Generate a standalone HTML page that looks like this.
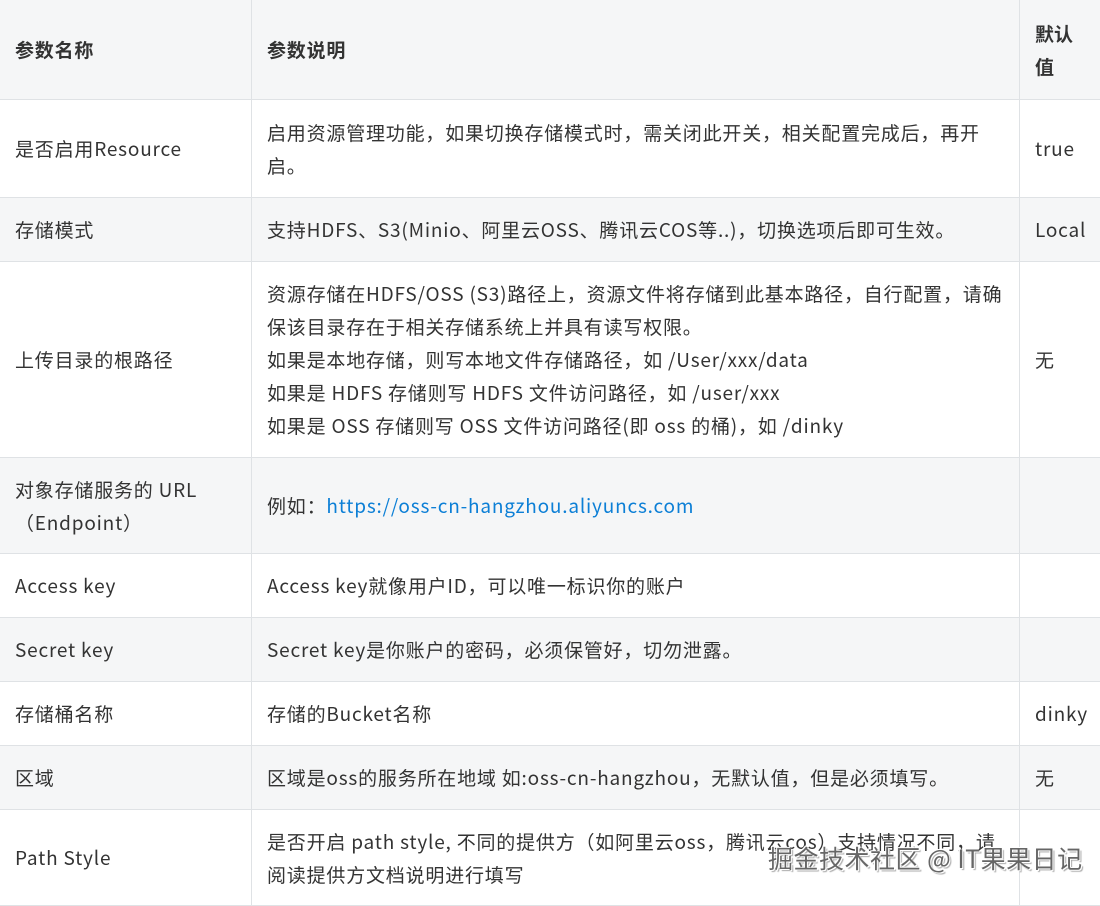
<!DOCTYPE html>
<html><head><meta charset="utf-8"><style>
body{margin:0;width:1100px;height:905px;overflow:hidden;background:#fff;font-family:"Noto Sans CJK SC","Liberation Sans",sans-serif;color:#333;font-size:19px;letter-spacing:0.8px}
table{border-collapse:collapse;position:absolute;left:-1px;top:-1px;table-layout:fixed;width:1103px}
td,th{border:1px solid #dfe2e5;padding:0 15px;line-height:33px;text-align:left;vertical-align:middle}
th{font-weight:bold;background:#f5f6f7}
tr:nth-child(odd) td{background:#f5f6f7}
a{color:#0c7fd6;text-decoration:none}
.wm{position:absolute;left:768px;top:840px;font-size:25px;color:#666;text-shadow:1px 1px 0 #fff,-1px -1px 0 #fff,2px 2px 1px #aaa;letter-spacing:0.5px}
</style></head><body>
<table>
<colgroup><col style="width:252px"><col style="width:768px"><col style="width:83px"></colgroup>
<tr style="height:100px"><th>参数名称</th><th>参数说明</th><th style="padding-right:20px;letter-spacing:0">默认<br>值</th></tr>
<tr style="height:98px"><td>是否启用Resource</td><td>启用资源管理功能，如果切换存储模式时，需关闭此开关，相关配置完成后，再开启。</td><td>true</td></tr>
<tr style="height:64px"><td>存储模式</td><td>支持HDFS、S3(Minio、阿里云OSS、腾讯云COS等..)，切换选项后即可生效。</td><td>Local</td></tr>
<tr style="height:196px"><td>上传目录的根路径</td><td>资源存储在HDFS/OSS (S3)路径上，资源文件将存储到此基本路径，自行配置，请确保该目录存在于相关存储系统上并具有读写权限。<br>如果是本地存储，则写本地文件存储路径，如 /User/xxx/data<br>如果是 HDFS 存储则写 HDFS 文件访问路径，如 /user/xxx<br>如果是 OSS 存储则写 OSS 文件访问路径(即 oss 的桶)，如 /dinky</td><td>无</td></tr>
<tr style="height:96px"><td>对象存储服务的 URL（Endpoint）</td><td>例如：<a>https://oss-cn-hangzhou.aliyuncs.com</a></td><td></td></tr>
<tr style="height:64px"><td>Access key</td><td>Access key就像用户ID，可以唯一标识你的账户</td><td></td></tr>
<tr style="height:64px"><td>Secret key</td><td>Secret key是你账户的密码，必须保管好，切勿泄露。</td><td></td></tr>
<tr style="height:64px"><td>存储桶名称</td><td>存储的Bucket名称</td><td>dinky</td></tr>
<tr style="height:64px"><td>区域</td><td>区域是oss的服务所在地域 如:oss-cn-hangzhou，无默认值，但是必须填写。</td><td>无</td></tr>
<tr style="height:96px"><td>Path Style</td><td>是否开启 path style, 不同的提供方（如阿里云oss，腾讯云cos）支持情况不同，请阅读提供方文档说明进行填写</td><td></td></tr>
</table>
<div class="wm">掘金技术社区 @ IT果果日记</div>
</body></html>
